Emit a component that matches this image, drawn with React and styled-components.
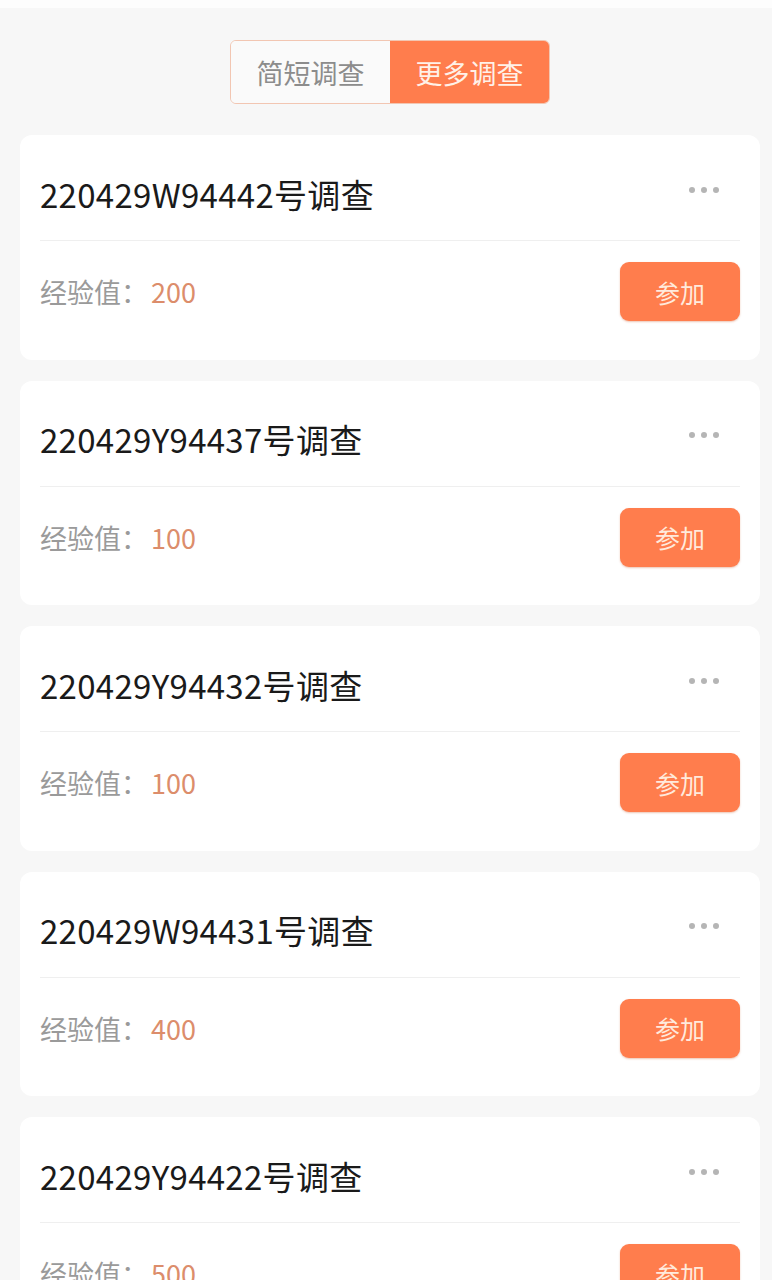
import React from "react";
import styled, { createGlobalStyle } from "styled-components";

const GlobalStyle = createGlobalStyle`
  html, body {
    margin: 0;
    padding: 0;
    background: #f7f7f7;
    font-family: "Noto Sans CJK SC", "Noto Sans", sans-serif;
  }
`;

const Page = styled.div`
  min-height: 1280px;
  background: #f7f7f7;
  border-top: 8px solid #fdfdfd;
  padding: 32px 12px 0 20px;
  box-sizing: border-box;
`;

const TabBar = styled.div`
  display: flex;
  justify-content: center;
  width: 740px;
  margin-bottom: 31px;
`;

const Tabs = styled.div`
  display: flex;
  width: 320px;
  height: 64px;
  border: 1px solid #f2c6b2;
  border-radius: 6px;
  overflow: hidden;
  box-sizing: border-box;
`;

const Tab = styled.div`
  flex: 1;
  display: flex;
  align-items: center;
  justify-content: center;
  font-size: 27px;
  background: ${(p) => (p.active ? "#ff7d4d" : "#fafafa")};
  color: ${(p) => (p.active ? "#fff1e8" : "#8c8c8c")};
`;

const List = styled.div`
  display: flex;
  flex-direction: column;
  gap: 21px;
`;

const Card = styled.div`
  background: #fff;
  border-radius: 12px;
  padding: 0 20px;
  width: 740px;
  box-sizing: border-box;
`;

const Header = styled.div`
  height: 106px;
  padding-top: 12px;
  box-sizing: border-box;
  display: flex;
  align-items: center;
  justify-content: space-between;
  border-bottom: 1px solid #efefef;
`;

const Title = styled.div`
  font-size: 33px;
  color: #1a1a1a;
  letter-spacing: 0.3px;
`;

const Dots = styled.div`
  display: flex;
  gap: 6px;
  margin-right: 21px;
  margin-top: -8px;
  span {
    width: 6px;
    height: 6px;
    border-radius: 50%;
    background: #b5b5b5;
  }
`;

const Footer = styled.div`
  display: flex;
  align-items: center;
  justify-content: space-between;
  padding: 21px 0 38.5px;
`;

const Exp = styled.div`
  font-size: 27px;
  color: #9a9a9a;
`;

const Value = styled.span`
  margin-left: 3px;
  color: #dc8d6b;
`;

const JoinButton = styled.button`
  width: 120px;
  height: 59px;
  border: none;
  border-radius: 9px;
  background: #ff7d4d;
  color: #ffeadc;
  font-family: inherit;
  font-size: 25px;
  box-shadow: 0 1px 2px rgba(200, 90, 40, 0.35);
`;

const surveys = [
  { id: "220429W94442", exp: 200 },
  { id: "220429Y94437", exp: 100 },
  { id: "220429Y94432", exp: 100 },
  { id: "220429W94431", exp: 400 },
  { id: "220429Y94422", exp: 500 },
];

export default function App() {
  return (
    <Page>
      <GlobalStyle />
      <TabBar>
        <Tabs>
          <Tab>简短调查</Tab>
          <Tab active>更多调查</Tab>
        </Tabs>
      </TabBar>
      <List>
        {surveys.map((s) => (
          <Card key={s.id}>
            <Header>
              <Title>{s.id}号调查</Title>
              <Dots>
                <span />
                <span />
                <span />
              </Dots>
            </Header>
            <Footer>
              <Exp>
                经验值：<Value>{s.exp}</Value>
              </Exp>
              <JoinButton>参加</JoinButton>
            </Footer>
          </Card>
        ))}
      </List>
    </Page>
  );
}
